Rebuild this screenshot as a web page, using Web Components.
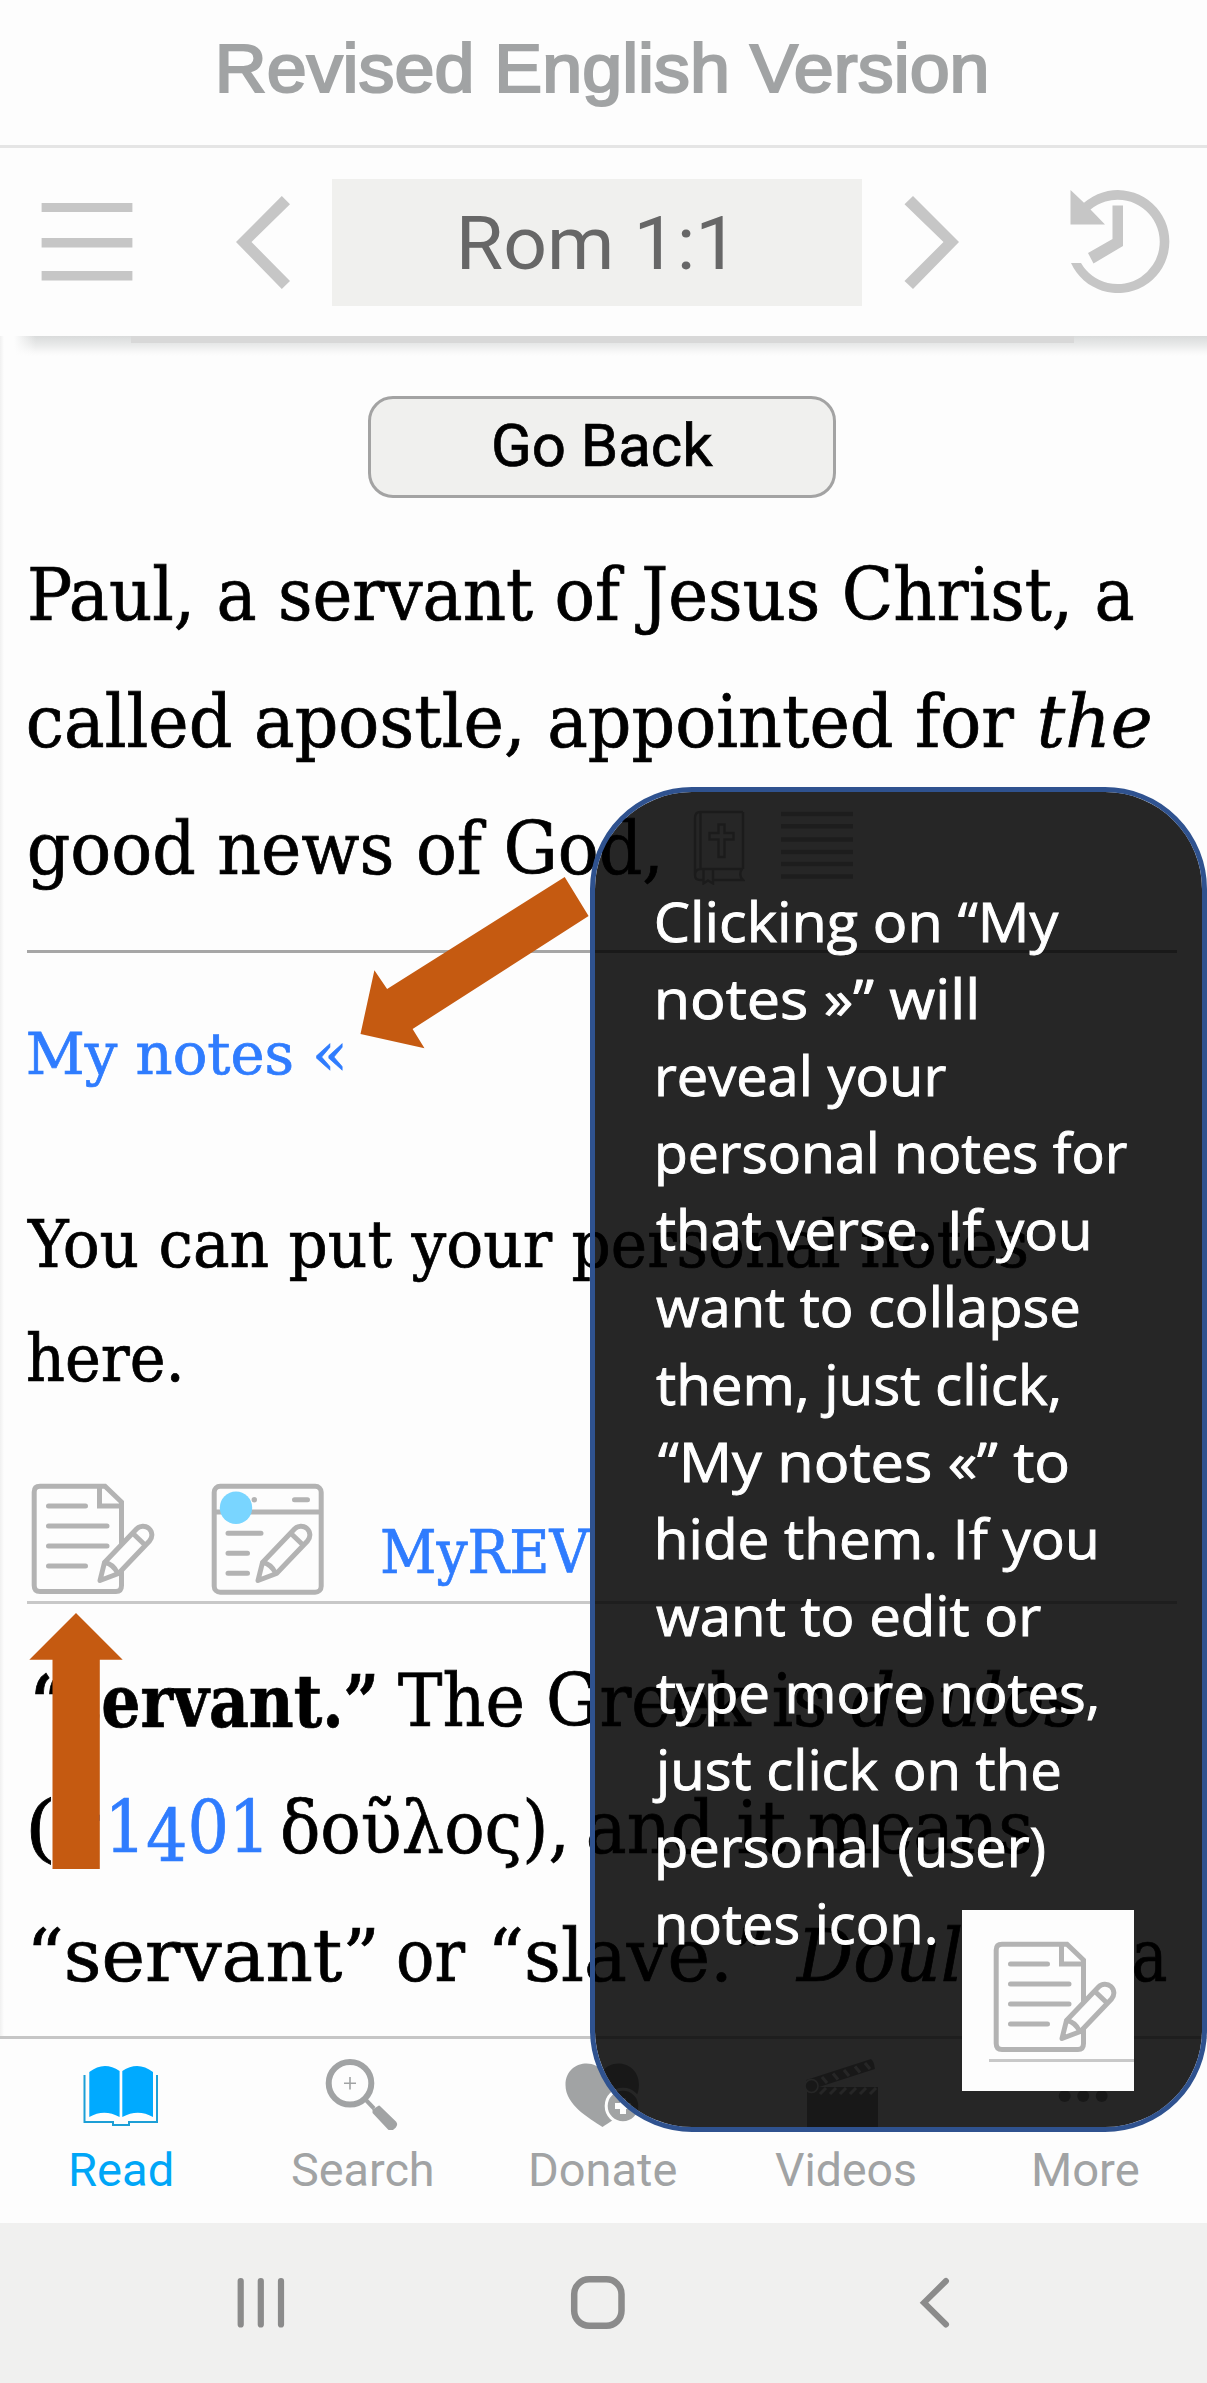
<!DOCTYPE html>
<html lang="en">
<head>
<meta charset="utf-8">
<title>Revised English Version</title>
<style>
html,body{margin:0;padding:0}
body{width:1207px;height:2383px;overflow:hidden;background:#fdfdfd}
</style>
</head>
<body>
<rev-app></rev-app>
<script>
const define = (name, html, after) => customElements.define(name, class extends HTMLElement {
  connectedCallback() {
    if (this.shadowRoot) return;
    this.attachShadow({mode: 'open'}).innerHTML = html;
    if (after) after(this);
  }
});

/* A single line of text whose inked width is exactly w pixels; gap is the space before it. */
customElements.define('fit-text', class extends HTMLElement {
  connectedCallback() {
    if (this.shadowRoot) return;
    const root = this.attachShadow({mode: 'open'});
    root.innerHTML = `<style>
      :host{display:block;flex:none;white-space:nowrap;height:var(--line);line-height:var(--line)}
      span{display:inline-block;transform-origin:0 0;white-space:pre}
    </style><span><slot></slot></span>`;
    const w = +this.getAttribute('w'), gap = +this.getAttribute('gap') || 0;
    this.style.width = w + 'px';
    this.style.marginLeft = gap + 'px';
    const cs = getComputedStyle(this);
    const ctx = document.createElement('canvas').getContext('2d');
    ctx.font = `${cs.fontStyle} ${cs.fontWeight} ${cs.fontSize} ${cs.fontFamily}`;
    const m = ctx.measureText(this.textContent);
    const s = w / (m.actualBoundingBoxLeft + m.actualBoundingBoxRight);
    root.querySelector('span').style.transform =
      `translateX(${m.actualBoundingBoxLeft * s}px) scaleX(${s})`;
  }
});

const pencil = dx => `<g transform="translate(${dx} 0)" stroke-linejoin="round" stroke-linecap="round">
  <path fill="#fdfdfd" d="M69 97.500L73.500 79.500L105.500 46A8.600 8.600 0 0 1 118.500 58L87.500 90.500Z"/>
  <path d="M74 79.500Q82 81 86.500 90M102 50.500L113.500 61.500"/></g>`;

define('note-icon', `<style>:host{display:block;width:125px;height:112px}svg{display:block}</style>
<svg width="125" height="112" fill="none" stroke="#b3b3b3" stroke-width="5">
<path d="M9 3.200H74L90.500 19V102.500Q90.500 108.500 85 108.500H9Q3.200 108.500 3.200 102.500V9Q3.200 3.200 9 3.200Z"/>
<path d="M68.500 4V23H90"/>
<path stroke-linecap="round" d="M17.500 23H54.500M17.500 43H76M17.500 63H76M17.500 83H54.500"/>
${pencil(0)}</svg>`);

define('window-note-icon', `<style>:host{display:block;width:114px;height:112px}svg{display:block}</style>
<svg width="114" height="112" fill="none" stroke="#b3b3b3" stroke-width="5">
<rect x="3.200" y="3.200" width="107" height="106" rx="6"/><path d="M3 29H110"/>
<circle cx="43.300" cy="16.700" r="2.700" fill="#b3b3b3" stroke="none"/>
<path stroke-linecap="round" d="M83.500 16.700H96.500M17 50.300H50M17 70.300H36.500M17 90.300H36.500"/>
${pencil(-22)}
<circle cx="25" cy="24.700" r="16.200" fill="#79d5ff" stroke="none"/></svg>`);

define('app-title', `<style>
:host{display:flex;height:145px;border-bottom:3px solid #e5e5e5;box-sizing:content-box;
font:400 69px "Liberation Sans",Arial,sans-serif;color:#a1a3a4;--line:138px;-webkit-text-stroke:2.200px #a1a3a4}
</style><fit-text gap="220" w="765">Revised English Version</fit-text>`);

define('nav-toolbar', `<style>
:host{display:flex;align-items:center;height:188px;background:#fdfdfd;position:relative;z-index:1;
font:75px Roboto,sans-serif;color:#676767}
svg{display:block;flex:none}
.menu{margin-left:41px}.prev{margin-left:103px}
.ref{margin-left:42px;width:530px;height:127px;background:#f0f0ee;--line:128px;flex:none}
.next{margin-left:42px}.hist{margin-left:111px}
.shade{position:absolute;left:14px;right:0;top:188px;height:20px;
background:linear-gradient(90deg,#fdfdfd,#fdfdfd00 22px),linear-gradient(#d9dbdb,#e9eaea 45%,#f8f8f8 80%,#fdfdfd)}
.shade i{position:absolute;left:117px;width:943px;top:0;height:7px;background:#d8d8d8}
</style>
<svg class="menu" width="92" height="78" fill="#c6c6c6"><path d="M.600-.500H91.400V9H.600ZM.600 35H91.400V44.500H.600ZM.600 68H91.400V77.500H.600Z"/></svg>
<svg class="prev" width="54" height="94" fill="#c6c6c6"><path d="M0 47L45.800 1L54 9.300L15.500 47L54 86L45.800 94Z"/></svg>
<div class="ref"><fit-text gap="130" w="261">Rom 1:1</fit-text></div>
<svg class="next" width="55" height="94" fill="#c6c6c6"><path d="M55 47L9 1L.500 9.300L39.500 47L.500 86L9 94Z"/></svg>
<svg class="hist" width="100" height="106" fill="#c6c6c6"><path d="M.500 1V35.500H35L20.500 20.500A42.200 42.200 0 1 1 11 74H1A51.500 51.500 0 1 0 14 13.800Z"/><path d="M42.500 16.500H53V57L23.500 74.500L18 64L42.500 50Z"/></svg>
<div class="shade"><i></i></div>`);

define('go-back', `<style>
:host{display:block;box-sizing:border-box;width:468px;height:102px;margin:60px 0 0 368px;border:3px solid #a3a3a3;
border-radius:25px;background:#f0f0ee;font:58.500px Roboto,sans-serif;color:#000;--line:95px}
</style><fit-text gap="123" w="219">Go Back</fit-text>`);

define('reader-page', `<style>
:host{display:block;height:1700px;overflow:hidden;color:#000;-webkit-text-stroke:.700px currentColor;
background:linear-gradient(90deg,#f0f0f0,#fdfdfd 4px);
font:72px "DejaVu Serif Condensed","DejaVu Serif",serif;font-stretch:condensed}
.row{display:flex}
.verse{margin-top:33.500px;--line:127px}
.verse svg{flex:none}
hr{margin:0 30px 0 27px;border:0;height:3px;background:#a6a6a6}
hr.a{margin-top:37.500px}
.link{color:#2f7cfe}
.my{margin-top:62px;font-size:58.500px;--line:79px}
.notes{margin-top:94px;font-size:65px;--line:114px}
.tools{margin-top:67px;height:112px;font-size:59px;--line:80px}
.tools note-icon{margin-left:31px}.tools window-note-icon{margin-left:55px}
.tools fit-text{margin-top:30px}
hr.b{margin-top:5.500px;background:#c8c8c8}
.com{margin-top:34px;--line:127.500px}
.old{vertical-align:-.13em;line-height:0}
</style>
<go-back></go-back>
<div class="verse">
 <div class="row"><fit-text gap="30" w="1103">Paul, a servant of Jesus Christ, a</fit-text></div>
 <div class="row"><fit-text gap="29" w="985">called apostle, appointed for</fit-text><fit-text gap="26" w="110" style="font-style:italic">the</fit-text></div>
 <div class="row"><fit-text gap="30" w="628">good news of God,</fit-text>
  <svg style="margin:23px 0 0 35px" width="52" height="76" fill="none" stroke="#b5b5b5" stroke-width="2.500"><path d="M50 3H7Q2 3 2 9V66Q2 71 7 71H10M20 71H50Q45 66 49 60H8Q2 60 2 66M50 3V60M7.500 3V60M10.500 60V74.500L15 71.500L20 74.500V60"/><path d="M25.500 15.500H31.500V24H40.500V30.500H31.500V48H25.500V30.500H16.500V24H25.500Z"/></svg>
  <svg style="margin:23px 0 0 36px" width="72" height="76" stroke="#c0c0c0" stroke-width="4.500"><path d="M0 5H72M0 17.300H72M0 30.500H72M0 43H72M0 55H72M0 67.500H72"/></svg>
 </div>
</div>
<hr class="a">
<div class="my link"><fit-text gap="27.700" w="315">My notes «</fit-text></div>
<div class="notes"><fit-text gap="27" w="1000">You can put your personal notes</fit-text><fit-text gap="28" w="152">here.</fit-text></div>
<div class="row tools link"><note-icon></note-icon><window-note-icon></window-note-icon><fit-text w="209" gap="57">MyREV</fit-text></div>
<hr class="b">
<div class="com">
 <div class="row"><fit-text gap="34.700" w="340" style="font-weight:bold">“servant.”</fit-text><fit-text gap="23" w="426">The Greek is</fit-text><fit-text gap="28" w="226" style="font-style:italic">doulos</fit-text></div>
 <div class="row"><fit-text gap="31" w="20">(</fit-text><fit-text gap="4" w="207" class="link">#1<span class="old">4</span>01</fit-text><fit-text gap="21" w="281">δοῦλος),</fit-text><fit-text gap="25" w="441">and it means</fit-text></div>
 <div class="row"><fit-text gap="33" w="341">“servant”</fit-text><fit-text gap="25" w="66">or</fit-text><fit-text gap="29" w="270">“slave.”</fit-text><fit-text gap="32" w="244" style="font-style:italic">Doulos</fit-text><fit-text gap="24" w="102">is a</fit-text></div>
</div>`);

define('tab-item', `<style>
:host{display:flex;flex:1 1 0;min-width:0;flex-direction:column;align-items:center;color:#a1a3a4;--line:60px}
:host([active]){color:#00a6f7}
::slotted(fit-text){margin-top:10px}
</style><slot name="icon"></slot><slot></slot>`);

define('tab-bar', `<style>
:host{display:flex;box-sizing:border-box;height:187px;border-top:3px solid #c6c6c6;padding-top:19px;background:#fdfdfd;
font:46.500px Roboto,sans-serif}
svg{display:block}
</style>
<tab-item active><svg slot="icon" width="80" height="72"><path fill="#00aaff" d="M8.300 14Q23 2.500 38.600 13V59Q23 50.500 8.300 59ZM41.300 13Q57 2.500 72 14V59Q57 50.500 41.300 59Z"/><path fill="none" stroke="#1d9fd6" stroke-width="2" d="M3.500 17V64H32V67H48V64H76V17"/></svg><fit-text w="100">Read</fit-text></tab-item>
<tab-item><svg slot="icon" width="80" height="72" stroke="#a1a3a4" fill="none"><circle cx="28" cy="25.300" r="21.300" stroke-width="6"/><path stroke-width="1.600" d="M22 25.300H34M28 19V31.500"/><path stroke-width="4" d="M43 41L52 50.500"/><path fill="#a1a3a4" stroke-width="2" stroke-linejoin="round" d="M51.500 52L57 48.500L73.500 64.500Q75 66.500 73 69L70 71.500Q68 72 66.500 70.500L51.500 54.500Z"/></svg><fit-text w="140">Search</fit-text></tab-item>
<tab-item><svg slot="icon" width="80" height="72"><path fill="#a1a3a4" d="M38.500 14C46 0 75 3 75 27C75 47 52 60 38.500 69C25 60 1.500 47 1.500 27C1.500 3 31 0 38.500 14Z"/><circle cx="59" cy="48" r="16.800" fill="#a1a3a4" stroke="#fdfdfd" stroke-width="3"/><path stroke="#fdfdfd" stroke-width="6" d="M51 48H67M59 40V56"/></svg><fit-text w="144.600">Donate</fit-text></tab-item>
<tab-item><svg slot="icon" width="80" height="72"><path fill="#a1a3a4" d="M2 29H73V70H2Z"/><path fill="#a1a3a4" d="M1 22L66 1Q69 3 70 11L8 31Z"/><path stroke="#fdfdfd" stroke-width="3" d="M15 36L21 30M25 36L31 30M35 36L41 30M45 36L51 30M55 36L61 30M65 36L71 30M17 19L22 25M28 15.500L33 21.500M39 12L44 18M50 8.500L55 14.500M60 5L65 11"/><circle cx="6.500" cy="28" r="6.500" fill="#a1a3a4" stroke="#fdfdfd" stroke-width="1.500"/></svg><fit-text w="140">Videos</fit-text></tab-item>
<tab-item><svg slot="icon" width="80" height="72" fill="#a1a3a4"><circle cx="18.700" cy="38" r="6"/><circle cx="37.200" cy="38" r="6"/><circle cx="55.700" cy="38" r="6"/></svg><fit-text w="104">More</fit-text></tab-item>`);

define('system-nav', `<style>
:host{display:flex;box-sizing:border-box;height:160px;background:#f0f0ef;padding:53px 0 0 237px;align-items:flex-start}
svg{display:block;flex:none}
</style>
<svg width="48" height="54" stroke="#8b8b8b" stroke-width="6.200" stroke-linecap="round"><path d="M3.700 5V48.500M23.800 5V48.500M44 5V48.500"/></svg>
<svg style="margin-left:285px" width="56" height="54" fill="none" stroke="#8b8b8b" stroke-width="6.500"><rect x="4.200" y="3.300" width="47.300" height="46.500" rx="15"/></svg>
<svg style="margin-left:292px" width="34" height="54" fill="none" stroke="#8b8b8b" stroke-width="6" stroke-linecap="round"><path d="M28 5L6 26.700L28 48.500"/></svg>`);

define('help-callout', `<style>
:host{position:absolute;z-index:2;left:590px;top:787px;box-sizing:border-box;width:617px;height:1345px;border:5px solid #2f528f;
border-radius:102px;background:#000000d9;background-clip:padding-box;padding:91px 0 0 61px;color:#fff;
-webkit-text-stroke:.900px #fff;font:54.600px "Open Sans","Noto Sans",sans-serif;--line:77.100px}
.demo{position:absolute;left:367px;top:1118px;width:172px;height:181px;background:#fdfdfd}
.demo note-icon{margin:31px 0 0 31px}
.demo hr{margin:6px 0 0 27px;border:0;height:3px;background:#c8c8c8}
</style>
<fit-text gap="1" w="402">Clicking on “My</fit-text>
<fit-text gap="2" w="318">notes »” will</fit-text>
<fit-text gap="2" w="288">reveal your</fit-text>
<fit-text gap="2" w="469">personal notes for</fit-text>
<fit-text gap="0" w="432">that verse. If you</fit-text>
<fit-text gap="0" w="422">want to collapse</fit-text>
<fit-text gap="0" w="403">them, just click,</fit-text>
<fit-text gap="2" w="409">“My notes «” to</fit-text>
<fit-text gap="2" w="437">hide them. If you</fit-text>
<fit-text gap="0" w="385">want to edit or</fit-text>
<fit-text gap="0" w="441">type more notes,</fit-text>
<fit-text gap="-3" w="406">just click on the</fit-text>
<fit-text gap="2" w="386">personal (user)</fit-text>
<fit-text gap="2" w="277">notes icon.</fit-text>
<div class="demo"><note-icon></note-icon><hr></div>`);

define('pointer-arrows', `<style>
:host{position:absolute;z-index:3;left:0;top:860px;width:600px;height:1020px}svg{display:block}
</style><svg width="600" height="1020" viewBox="0 860 600 1020" fill="#c55a11">
<path d="M360.500 1034L374.400 970.200L387.100 989.100L564.700 877L588.600 915.900L412.600 1029L424.500 1048.300Z"/>
<path d="M76 1613L122.700 1659.800H99.800V1869H52.500V1659.800H29.300Z"/></svg>`);

define('rev-app', `<style>
:host{display:flex;flex-direction:column;position:relative;width:1207px;height:2383px;overflow:hidden;background:#fdfdfd}
:host>*{flex:none}
app-title,nav-toolbar,reader-page,tab-bar,system-nav{flex:none}
</style>
<app-title></app-title><nav-toolbar></nav-toolbar><reader-page></reader-page><tab-bar></tab-bar><system-nav></system-nav>
<help-callout></help-callout><pointer-arrows></pointer-arrows>`);
</script>
</body>
</html>
